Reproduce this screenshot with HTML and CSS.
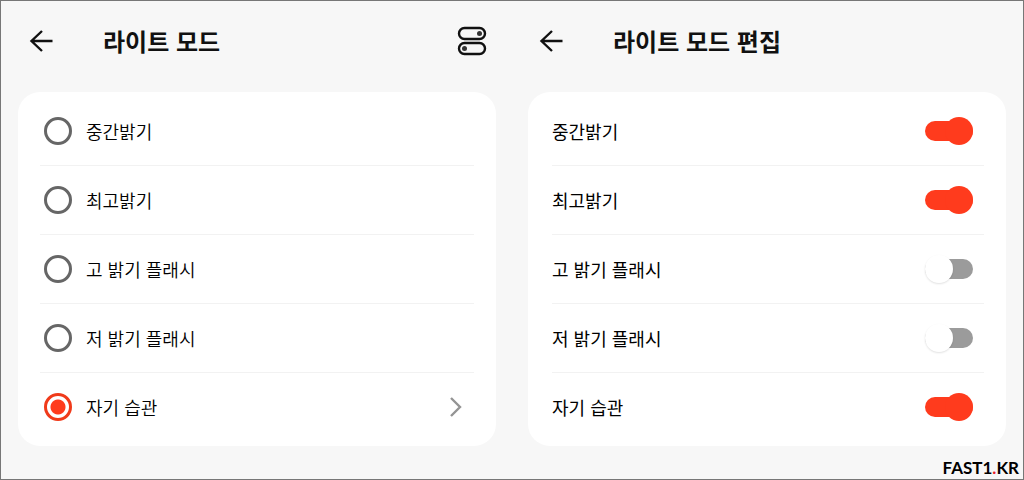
FILE: index.html
```html
<!DOCTYPE html>
<html lang="ko">
<head>
  <meta charset="UTF-8" />
  <meta name="viewport" content="width=device-width, initial-scale=1.0"/>
  <title>라이트 모드</title>
  <link rel="stylesheet" href="styles.css">
</head>
<body>
  <div class="screens">
    <section class="screen">
      <header class="topbar">
        <button type="button" class="icon-btn" aria-label="뒤로">
          <svg width="24" height="24" viewBox="0 0 24 24"><path d="M23.500 12H2.500M13 2L2.500 12 13 22"/></svg>
        </button>
        <h1>라이트 모드</h1>
        <button type="button" class="icon-btn edit-btn" aria-label="편집">
          <svg width="30" height="30" viewBox="0 0 30 30">
            <rect x="2" y="2" width="26" height="11" rx="5.500"/>
            <rect x="2" y="17" width="26" height="11" rx="5.500"/>
            <circle class="dot" cx="22.500" cy="7.500" r="2.500"/>
            <circle class="dot" cx="7.500" cy="22.500" r="2.500"/>
          </svg>
        </button>
      </header>
      <ul class="card modes">
        <li><label><input type="radio" name="mode">중간밝기</label></li>
        <li><label><input type="radio" name="mode">최고밝기</label></li>
        <li><label><input type="radio" name="mode">고 밝기 플래시</label></li>
        <li><label><input type="radio" name="mode">저 밝기 플래시</label></li>
        <li>
          <label><input type="radio" name="mode" checked>자기 습관</label>
          <button type="button" class="icon-btn more-btn" aria-label="자기 습관 설정">
            <svg width="14" height="22" viewBox="0 0 14 22"><path d="M2 2l9 9-9 9"/></svg>
          </button>
        </li>
      </ul>
    </section>

    <section class="screen">
      <header class="topbar">
        <button type="button" class="icon-btn" aria-label="뒤로">
          <svg width="24" height="24" viewBox="0 0 24 24"><path d="M23.500 12H2.500M13 2L2.500 12 13 22"/></svg>
        </button>
        <h1>라이트 모드 편집</h1>
      </header>
      <ul class="card toggles">
        <li><label for="t1">중간밝기</label><input type="checkbox" id="t1" checked></li>
        <li><label for="t2">최고밝기</label><input type="checkbox" id="t2" checked></li>
        <li><label for="t3">고 밝기 플래시</label><input type="checkbox" id="t3"></li>
        <li><label for="t4">저 밝기 플래시</label><input type="checkbox" id="t4"></li>
        <li><label for="t5">자기 습관</label><input type="checkbox" id="t5" checked></li>
      </ul>
    </section>
    <div class="brand">FAST1<span>.</span>KR</div>
  </div>
</body>
</html>
```
FILE: styles.css
```css
* {
  box-sizing: border-box;
}

body {
  margin: 0;
  background: #f7f7f7;
  color: #111;
  font-family: "Noto Sans CJK KR", sans-serif;
}

.screens {
  position: relative;
  display: flex;
  gap: 32px;
  min-height: 100vh;
  padding: 0 17px 33px;
  border: 1px solid #777;
}

.screen {
  flex: 1;
}

.topbar {
  display: flex;
  align-items: center;
  height: 91px;
  padding: 0 9px 11px 11px;
}

h1 {
  flex: 1;
  margin: 0 0 0 50px;
  font-size: 24px;
  line-height: 32px;
  font-weight: 700;
}

.icon-btn {
  display: flex;
  padding: 0;
  border: none;
  background: none;
  cursor: pointer;
}

.icon-btn svg {
  fill: none;
  stroke: #111;
  stroke-width: 2.4;
}

.edit-btn .dot {
  fill: #333;
  stroke: none;
}

.more-btn svg {
  stroke: #949494;
}

.card {
  margin: 0;
  padding: 5px 22px 6px;
  list-style: none;
  background: #fff;
  border-radius: 22px;
}

.card li {
  display: flex;
  align-items: center;
  justify-content: space-between;
  height: 69px;
  border-bottom: 1px solid #f2f2f2;
  color: #000;
  font-size: 18px;
  line-height: 28px;
}

.card li:last-child {
  height: 67px;
  border-bottom: none;
}

.modes {
  font-weight: 350;
}

.modes li {
  padding: 0 11px 0 4px;
}

.modes label {
  display: flex;
  align-items: center;
  gap: 14px;
}

input {
  appearance: none;
  margin: 0;
  cursor: pointer;
}

input[type="radio"] {
  width: 28px;
  height: 28px;
  border: 3px solid #666;
  border-radius: 50%;
}

input[type="radio"]:checked {
  border-color: #f03a1a;
  background: radial-gradient(circle, #ff3b1d 7px, #fff 8px);
}

.toggles {
  padding-left: 24px;
  font-weight: 400;
}

.toggles li {
  padding-right: 11px;
}

input[type="checkbox"] {
  display: flex;
  align-items: center;
  width: 48px;
  height: 20px;
  border-radius: 10px;
  background: #9b9b9b;
}

/* thumb is taller than the track */
input[type="checkbox"]::before {
  content: "";
  flex: none;
  width: 28px;
  height: 28px;
  border-radius: 50%;
  background: #fff;
  box-shadow: 0 1px 2px rgba(0, 0, 0, 0.12);
}

input[type="checkbox"]:checked {
  justify-content: flex-end;
  background: #ff3b1d;
}

input[type="checkbox"]:checked::before {
  background: #ff3b1d;
  box-shadow: none;
}

.brand {
  position: absolute;
  right: 4px;
  bottom: 0;
  color: #000;
  font-family: Lato, sans-serif;
  font-size: 17px;
  line-height: 22px;
  font-weight: 700;
}

.brand span {
  color: #e8202a;
}
```
